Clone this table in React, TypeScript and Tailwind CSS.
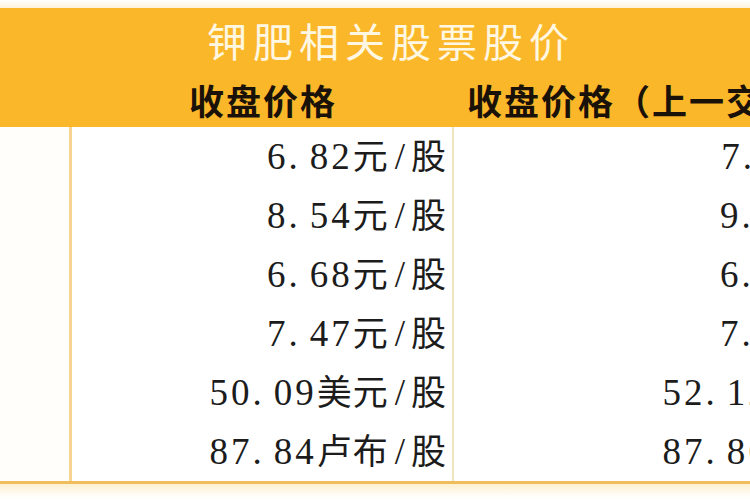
import React from "react";

const rows: { a: [string, string, string]; b: [string, string, string] }[] = [
  { a: ["6", "82", "元/股"], b: ["7", "11", "元/股"] },
  { a: ["8", "54", "元/股"], b: ["9", "02", "元/股"] },
  { a: ["6", "68", "元/股"], b: ["6", "95", "元/股"] },
  { a: ["7", "47", "元/股"], b: ["7", "63", "元/股"] },
  { a: ["50", "09", "美元/股"], b: ["52", "12", "美元/股"] },
  { a: ["87", "84", "卢布/股"], b: ["87", "86", "卢布/股"] },
];

function Price({ v }: { v: [string, string, string] }) {
  const unit = v[2].split("/");
  return (
    <span className="inline-flex items-baseline whitespace-nowrap text-[#1c1c1c]">
      <span className="font-['Liberation_Serif',serif] text-[37px] tracking-[3px]">{v[0]}</span>
      <span className="font-['Liberation_Serif',serif] text-[37px] mr-[12px]">.</span>
      <span className="font-['Liberation_Serif',serif] text-[37px] tracking-[3px]">{v[1]}</span>
      <span className="font-['Noto_Sans_CJK_SC',sans-serif] text-[35px] tracking-[1px] font-normal">{unit[0]}</span>
      <span className="font-['Liberation_Serif',serif] text-[37px] px-[6px]">/</span>
      <span className="font-['Noto_Sans_CJK_SC',sans-serif] text-[35px] font-normal">{unit[1]}</span>
    </span>
  );
}

export default function App() {
  return (
    <div className="w-[750px] h-[500px] overflow-hidden bg-white">
      <div className="w-[910px]">
        <div className="h-[8px] bg-gradient-to-b from-white to-[#fdf3dc]" />
        <div className="bg-[#fbb72a]">
          <div className="w-[782px] h-[64px] flex items-center justify-center">
            <span className="font-['Noto_Sans_CJK_SC',sans-serif] text-[40px] tracking-[6px] text-[#fff7e2] font-normal leading-none">
              钾肥相关股票股价
            </span>
          </div>
          <div className="flex h-[55px] items-center">
            <div className="w-[72px]" />
            <div className="w-[382px] flex justify-center">
              <span className="font-['Noto_Sans_CJK_SC',sans-serif] text-[35px] font-bold text-[#1a1208] tracking-[2px] leading-none">
                收盘价格
              </span>
            </div>
            <div className="w-[456px] flex justify-start pl-[13px]">
              <span className="font-['Noto_Sans_CJK_SC',sans-serif] text-[35px] font-bold text-[#1a1208] tracking-[2px] leading-none whitespace-nowrap">
                收盘价格（上一交易日）
              </span>
            </div>
          </div>
        </div>
        <div className="flex border-b-[3px] border-[#efbd5c]">
          <div className="w-[72px] border-r-[3px] border-[#f7d591] bg-[#fffefa]" />
          <div className="w-[382px] border-r-[2px] border-[#f2e4bd] flex flex-col">
            {rows.map((r, i) => (
              <div key={i} className="h-[59px] flex items-center justify-end pr-[6px]">
                <Price v={r.a} />
              </div>
            ))}
          </div>
          <div className="w-[456px] flex flex-col">
            {rows.map((r, i) => (
              <div key={i} className="h-[59px] flex items-center justify-end pr-[11px]">
                <Price v={r.b} />
              </div>
            ))}
          </div>
        </div>
        <div className="h-[14px] bg-gradient-to-b from-[#fdf0d0] to-white" />
      </div>
    </div>
  );
}
